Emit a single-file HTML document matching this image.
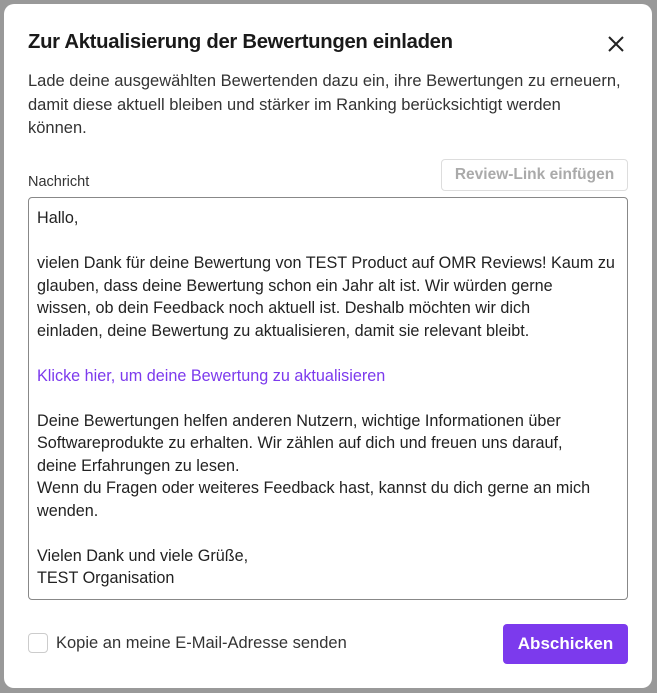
<!DOCTYPE html>
<html><head><meta charset="utf-8"><style>
*{box-sizing:border-box;margin:0;padding:0}
body{width:657px;height:693px;background:#999;font-family:"Liberation Sans",sans-serif;position:relative;overflow:hidden;color:#1a1a1a}
.modal{position:absolute;left:4px;top:4px;width:648px;height:684px;background:#fff;border-radius:10px}
.title{position:absolute;left:24px;top:27px;font-size:20.3px;font-weight:bold;letter-spacing:-0.3px;white-space:nowrap}
.close{position:absolute;left:603px;top:31px}
.desc{position:absolute;left:24px;top:66px;font-size:16.5px;line-height:23.5px;color:#333;white-space:nowrap}
.lbl{position:absolute;left:24px;top:170px;font-size:14.5px;color:#333}
.rl{position:absolute;left:437px;top:155px;width:187px;height:32px;border:1px solid #ddd;border-radius:4px;font-size:15.5px;font-weight:bold;color:#aaa;text-align:center;line-height:30px}
.ta{position:absolute;left:24px;top:193px;width:600px;height:403px;border:1px solid #888;border-radius:4px;padding:9px 8px;font-size:16.2px;line-height:22.5px;color:#222;white-space:nowrap}
.ta a{color:#7c3aed;text-decoration:none}
.cb{position:absolute;left:24px;top:629px;width:20px;height:20px;border:1px solid #ccc;border-radius:4px}
.cbl{position:absolute;left:52px;top:630px;font-size:16.5px;color:#333}
.btn{position:absolute;left:499px;top:620px;width:125px;height:40px;background:#7c3aed;border-radius:4px;color:#fff;font-weight:bold;font-size:17px;text-align:center;line-height:40px}
</style></head><body>
<div class="modal">
<div class="title">Zur Aktualisierung der Bewertungen einladen</div>
<svg class="close" width="18" height="18" viewBox="0 0 18 18"><path d="M2 2L16 16M16 2L2 16" stroke="#222" stroke-width="2"/></svg>
<div class="desc">Lade deine ausgewählten Bewertenden dazu ein, ihre Bewertungen zu erneuern,<br>damit diese aktuell bleiben und stärker im Ranking berücksichtigt werden<br>können.</div>
<div class="lbl">Nachricht</div>
<div class="rl">Review-Link einfügen</div>
<div class="ta">Hallo,<br><br>vielen Dank für deine Bewertung von TEST Product auf OMR Reviews! Kaum zu<br>glauben, dass deine Bewertung schon ein Jahr alt ist. Wir würden gerne<br>wissen, ob dein Feedback noch aktuell ist. Deshalb möchten wir dich<br>einladen, deine Bewertung zu aktualisieren, damit sie relevant bleibt.<br><br><a>Klicke hier, um deine Bewertung zu aktualisieren</a><br><br>Deine Bewertungen helfen anderen Nutzern, wichtige Informationen über<br>Softwareprodukte zu erhalten. Wir zählen auf dich und freuen uns darauf,<br>deine Erfahrungen zu lesen.<br>Wenn du Fragen oder weiteres Feedback hast, kannst du dich gerne an mich<br>wenden.<br><br>Vielen Dank und viele Grüße,<br>TEST Organisation</div>
<div class="cb"></div>
<div class="cbl">Kopie an meine E-Mail-Adresse senden</div>
<div class="btn">Abschicken</div>
</div>
</body></html>
